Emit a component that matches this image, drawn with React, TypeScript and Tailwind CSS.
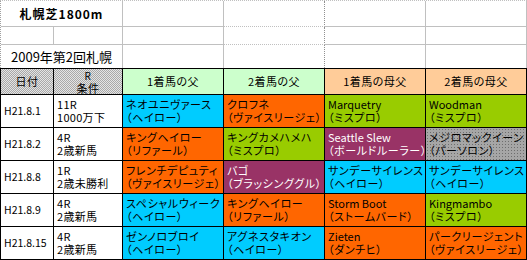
import React from "react";

const CY = "bg-[#00ccff]";
const OR = "bg-[#ff6600]";
const GR = "bg-[#99cc00]";
const PL = "bg-[#993366] text-white";
const GY =
  "bg-[#a6a6a6] bg-[radial-gradient(#6e6e6e_0.7px,transparent_0.8px)] bg-[length:3px_3px]";

type Horse = { name: string; sub: string; color: string };

const rows: { date: string; race: string; cond: string; horses: Horse[] }[] = [
  {
    date: "H21.8.1",
    race: "11R",
    cond: "1000万下",
    horses: [
      { name: "ネオユニヴァース", sub: "（ヘイロー）", color: CY },
      { name: "クロフネ", sub: "（ヴァイスリージェ）", color: OR },
      { name: "Marquetry", sub: "（ミスプロ）", color: GR },
      { name: "Woodman", sub: "（ミスプロ）", color: GR },
    ],
  },
  {
    date: "H21.8.2",
    race: "4R",
    cond: "2歳新馬",
    horses: [
      { name: "キングヘイロー", sub: "（リファール）", color: OR },
      { name: "キングカメハメハ", sub: "（ミスプロ）", color: GR },
      { name: "Seattle Slew", sub: "（ボールドルーラー）", color: PL },
      { name: "メジロマックイーン", sub: "（パーソロン）", color: GY },
    ],
  },
  {
    date: "H21.8.8",
    race: "1R",
    cond: "2歳未勝利",
    horses: [
      { name: "フレンチデピュティ", sub: "（ヴァイスリージェ）", color: OR },
      { name: "バゴ", sub: "（ブラッシンググル）", color: PL },
      { name: "サンデーサイレンス", sub: "（ヘイロー）", color: CY },
      { name: "サンデーサイレンス", sub: "（ヘイロー）", color: CY },
    ],
  },
  {
    date: "H21.8.9",
    race: "4R",
    cond: "2歳新馬",
    horses: [
      { name: "スペシャルウィーク", sub: "（ヘイロー）", color: CY },
      { name: "キングヘイロー", sub: "（リファール）", color: OR },
      { name: "Storm Boot", sub: "（ストームバード）", color: OR },
      { name: "Kingmambo", sub: "（ミスプロ）", color: GR },
    ],
  },
  {
    date: "H21.8.15",
    race: "4R",
    cond: "2歳新馬",
    horses: [
      { name: "ゼンノロブロイ", sub: "（ヘイロー）", color: CY },
      { name: "アグネスタキオン", sub: "（ヘイロー）", color: CY },
      { name: "Zieten", sub: "（ダンチヒ）", color: OR },
      { name: "パークリージェント", sub: "（ヴァイスリージェ）", color: OR },
    ],
  },
];

const cols = "grid grid-cols-[53px_69px_101px_101px_101px_101px]";
const hd =
  "border-r border-b border-black flex items-center justify-center text-center leading-[13px] tracking-[0.5px]";
const gridCell = "border-r border-b border-[#c0c0c0]";
const dots =
  "bg-[#c8c8c8] bg-[conic-gradient(#a8a8a8_25%,#e4e4e4_0_50%,#a8a8a8_0_75%,#e4e4e4_0)] bg-[length:2px_2px]";

// latin horse names keep normal spacing, katakana gets a little air
const isLatin = (s: string) => /^[A-Za-z]/.test(s);

export default function App() {
  return (
    <div className="w-[527px] h-[260px] overflow-hidden bg-white text-black text-[11px] [font-feature-settings:'palt'] font-['Noto_Sans_CJK_JP','Noto_Sans_CJK_SC',sans-serif]">
      {/* blank sheet area above the table */}
      <div className="border-t border-t-[#c0c0c0] border-l border-dotted border-l-[#a0a0a0]">
        <div className={cols + " h-[26px]"}>
          <div className={gridCell + " col-span-2 flex items-center justify-center font-bold text-[12px] tracking-[1px]"}>
            札幌芝1800m
          </div>
          <div className={gridCell} />
          <div className="border-r border-dotted border-r-[#909090] border-b border-b-[#c0c0c0]" />
          <div className={gridCell} />
          <div className={gridCell} />
        </div>
        <div className={cols + " h-[18px]"}>
          <div className={gridCell} />
          <div className={gridCell} />
          <div className={gridCell} />
          <div className="border-r border-dotted border-r-[#909090] border-b border-b-[#c0c0c0]" />
          <div className={gridCell} />
          <div className={gridCell} />
        </div>
        <div className={cols + " h-[23px]"}>
          <div className="col-span-2 border-r border-[#c0c0c0] flex items-center pl-[10px] text-[13px]">
            2009年第2回札幌
          </div>
          <div className="border-r border-[#c0c0c0]" />
          <div className="border-r border-dotted border-[#909090]" />
          <div className="border-r border-[#c0c0c0]" />
          <div className="border-r border-[#c0c0c0]" />
        </div>
      </div>

      {/* race table */}
      <div className={cols + " border-t border-l border-black"}>
        <div className={hd + " h-[26px] " + dots}>日付</div>
        <div className={hd + " h-[26px] flex-col leading-[12px] " + dots}>
          <span className="text-[10px]">R</span>
          <span>条件</span>
        </div>
        <div className={hd + " bg-[#ccffcc]"}>1着馬の父</div>
        <div className={hd + " bg-[#ccffcc]"}>2着馬の父</div>
        <div className={hd + " bg-[#ffcc99]"}>1着馬の母父</div>
        <div className={hd + " bg-[#ffcc99]"}>2着馬の母父</div>

        {rows.map((r) => (
          <React.Fragment key={r.date}>
            <div className="h-[33px] border-r border-b border-black flex items-center pl-[3px] text-[10.5px]">
              {r.date}
            </div>
            <div className="h-[33px] border-r border-b border-black flex flex-col justify-center pl-[3px] leading-[13px] tracking-[0.3px]">
              <span>{r.race}</span>
              <span>{r.cond}</span>
            </div>
            {r.horses.map((h, i) => (
              <div
                key={i}
                className={
                  "h-[33px] border-r border-b border-black flex flex-col justify-center pl-[3px] leading-[13px] whitespace-nowrap overflow-hidden " +
                  h.color
                }
              >
                <span className={isLatin(h.name) ? "" : "tracking-[0.6px]"}>
                  {h.name}
                </span>
                <span className="tracking-[0.6px]">{h.sub}</span>
              </div>
            ))}
          </React.Fragment>
        ))}
      </div>
    </div>
  );
}
